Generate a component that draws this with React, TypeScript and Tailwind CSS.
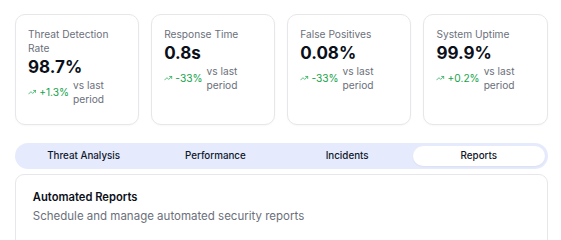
import React from "react";

function TrendUp() {
  return (
    <svg
      viewBox="0 0 24 24"
      className="w-[8.4px] h-[8.4px] mr-[2.8px] shrink-0"
      fill="none"
      stroke="currentColor"
      strokeWidth={2}
      strokeLinecap="round"
      strokeLinejoin="round"
    >
      <path d="M16 7h6v6" />
      <path d="m22 7-8.5 8.5-5-5L2 17" />
    </svg>
  );
}

const stats = [
  { label: "Threat Detection Rate", value: "98.7%", change: "+1.3%" },
  { label: "Response Time", value: "0.8s", change: "-33%" },
  { label: "False Positives", value: "0.08%", change: "-33%" },
  { label: "System Uptime", value: "99.9%", change: "+0.2%" },
];

const tabs = ["Threat Analysis", "Performance", "Incidents", "Reports"];

export default function App() {
  return (
    <div className="min-h-screen bg-white font-['Inter',sans-serif] pl-[15px] pr-[13.5px] pt-[14px]">
      <div className="grid grid-cols-4 gap-[12px]">
        {stats.map((s) => (
          <div
            key={s.label}
            className="rounded-[10px] border border-[#e7e7eb] bg-white px-[12px] pt-[12px] pb-[18px] shadow-[0_1px_2px_rgba(0,0,0,0.03)]"
          >
            <div className="text-[10.2px] leading-[14px] text-[#6b6f7b]">{s.label}</div>
            <div className="mt-[1px] text-[17px] leading-[22.4px] font-bold text-[#0b0f19]">
              {s.value}
            </div>
            <div className="flex items-center text-[10.2px] leading-[14px]">
              <span className="flex items-center text-[#16a34a]">
                <TrendUp />
                <span>{s.change}</span>
              </span>
              <span className="ml-[4px] text-[#6b6f7b]">vs last period</span>
            </div>
          </div>
        ))}
      </div>

      <div className="mt-[18px] grid grid-cols-4 h-[25.2px] items-center rounded-full bg-[#e6eafd] p-[2.8px]">
        {tabs.map((t) => (
          <div
            key={t}
            className={
              t === "Reports"
                ? "flex h-full items-center justify-center rounded-full bg-white text-[9.8px] font-medium text-[#0f172a] shadow-[0_1px_2px_rgba(0,0,0,0.05)]"
                : "flex h-full items-center justify-center rounded-full text-[9.8px] font-medium text-[#0f172a]"
            }
          >
            {t}
          </div>
        ))}
      </div>

      <div className="mt-[5.6px] rounded-[9px] border border-[#e7e7eb] bg-white p-[16.8px] pb-[40px]">
        <div className="text-[11.2px] leading-none font-semibold text-[#0b0f19]">
          Automated Reports
        </div>
        <div className="mt-[5px] text-[11.5px] leading-[16.8px] text-[#6b6f7b]">
          Schedule and manage automated security reports
        </div>
      </div>
    </div>
  );
}
